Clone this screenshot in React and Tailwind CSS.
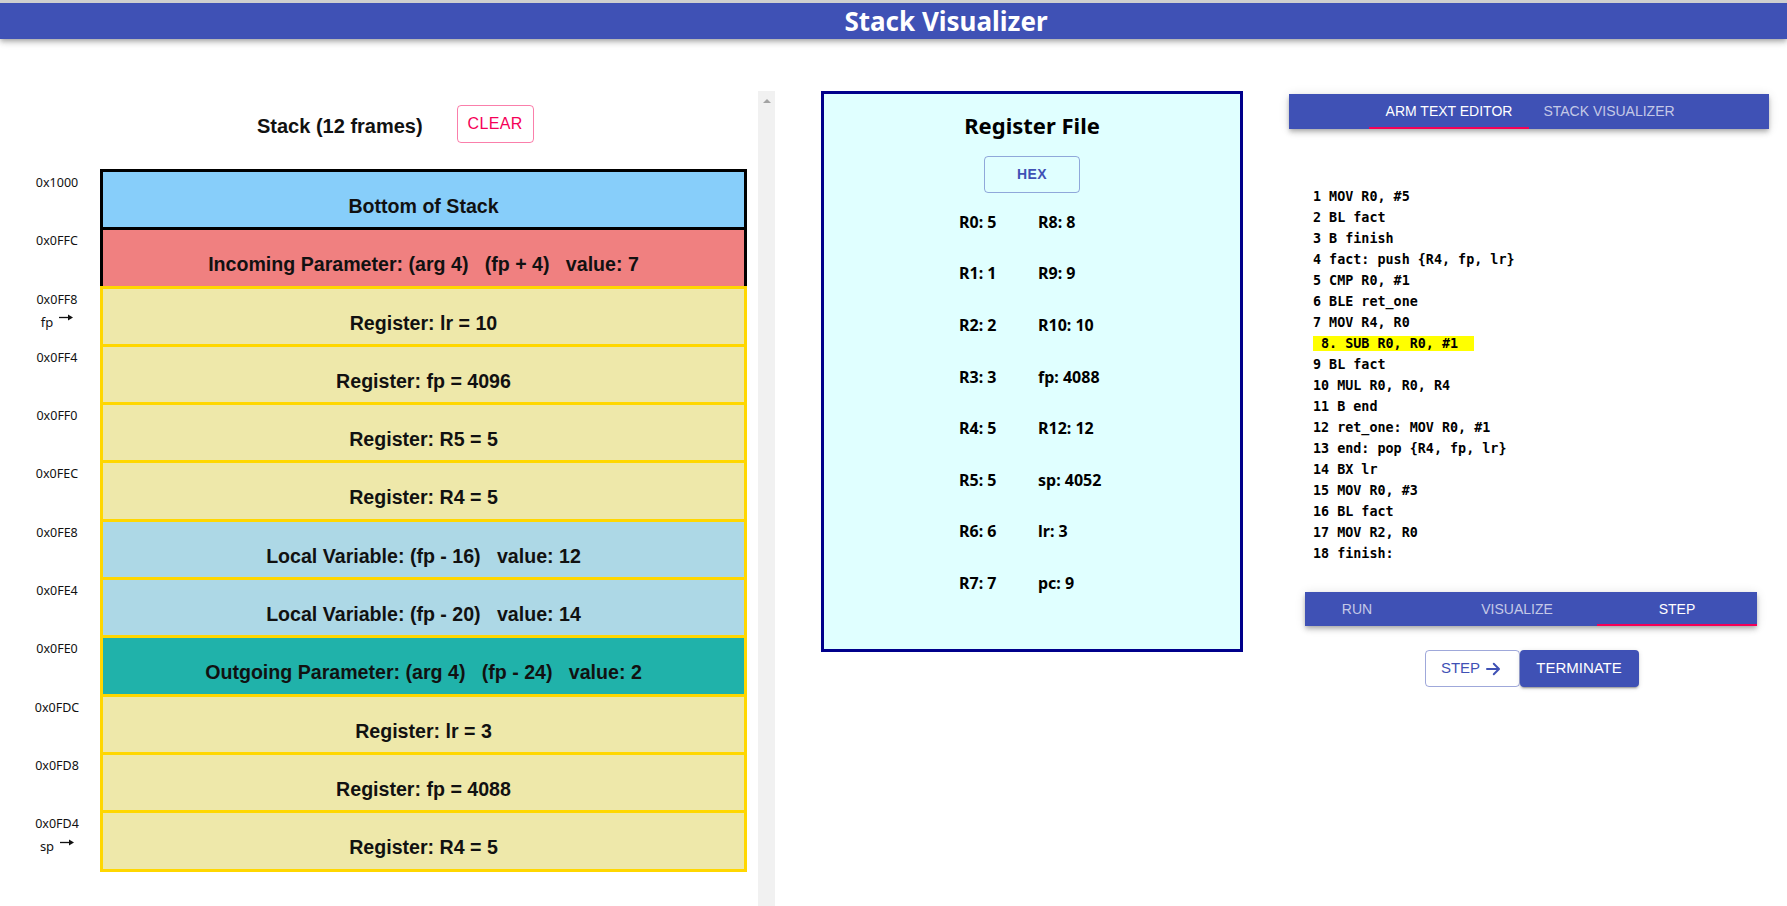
import React from "react";

const ARIAL = { fontFamily: '"Liberation Sans", Arial, sans-serif' };
const SEGOE = { fontFamily: '"Noto Sans", "Open Sans", sans-serif' };
const MONO = { fontFamily: '"DejaVu Sans Mono", "Liberation Mono", monospace' };

const frames = [
  { addr: "0x1000", text: "Bottom of Stack", cls: "bg-[#87cefa] border-black" },
  { addr: "0x0FFC", text: "Incoming Parameter: (arg 4)   (fp + 4)   value: 7", cls: "bg-[#f08080] border-black" },
  { addr: "0x0FF8", ptr: "fp", text: "Register: lr = 10", cls: "bg-[#eee8aa] border-[#ffd700]" },
  { addr: "0x0FF4", text: "Register: fp = 4096", cls: "bg-[#eee8aa] border-[#ffd700]" },
  { addr: "0x0FF0", text: "Register: R5 = 5", cls: "bg-[#eee8aa] border-[#ffd700]" },
  { addr: "0x0FEC", text: "Register: R4 = 5", cls: "bg-[#eee8aa] border-[#ffd700]" },
  { addr: "0x0FE8", text: "Local Variable: (fp - 16)   value: 12", cls: "bg-[#add8e6] border-[#ffd700]" },
  { addr: "0x0FE4", text: "Local Variable: (fp - 20)   value: 14", cls: "bg-[#add8e6] border-[#ffd700]" },
  { addr: "0x0FE0", text: "Outgoing Parameter: (arg 4)   (fp - 24)   value: 2", cls: "bg-[#20b2aa] border-[#ffd700]" },
  { addr: "0x0FDC", text: "Register: lr = 3", cls: "bg-[#eee8aa] border-[#ffd700]" },
  { addr: "0x0FD8", text: "Register: fp = 4088", cls: "bg-[#eee8aa] border-[#ffd700]" },
  { addr: "0x0FD4", ptr: "sp", text: "Register: R4 = 5", cls: "bg-[#eee8aa] border-[#ffd700]" },
];

const regs = [
  ["R0: 5", "R8: 8"],
  ["R1: 1", "R9: 9"],
  ["R2: 2", "R10: 10"],
  ["R3: 3", "fp: 4088"],
  ["R4: 5", "R12: 12"],
  ["R5: 5", "sp: 4052"],
  ["R6: 6", "lr: 3"],
  ["R7: 7", "pc: 9"],
];

const code = [
  "1 MOV R0, #5",
  "2 BL fact",
  "3 B finish",
  "4 fact: push {R4, fp, lr}",
  "5 CMP R0, #1",
  "6 BLE ret_one",
  "7 MOV R4, R0",
  null,
  "9 BL fact",
  "10 MUL R0, R0, R4",
  "11 B end",
  "12 ret_one: MOV R0, #1",
  "13 end: pop {R4, fp, lr}",
  "14 BX lr",
  "15 MOV R0, #3",
  "16 BL fact",
  "17 MOV R2, R0",
  "18 finish:",
];

const SmallArrow = () => (
  <svg width="14" height="7" viewBox="0 0 14 7" className="mb-[8px]">
    <line x1="0" y1="3.5" x2="10" y2="3.5" stroke="#111" strokeWidth="1.3" />
    <polygon points="9,0.5 14,3.5 9,6.5" fill="#111" />
  </svg>
);

const Frame = ({ f, first }) => (
  <div className={`flex ${first ? "" : "-mt-[3px]"}`}>
    <div className="w-[100px] shrink-0 pl-[14px] pt-[5px] flex flex-col items-center text-[12.5px] leading-[18px] text-[#111]" style={SEGOE}>
      <span>{f.addr}</span>
      {f.ptr && (
        <span className="flex items-center gap-[6px] mt-[4px] text-[13px]">
          {f.ptr}
          <SmallArrow />
        </span>
      )}
    </div>
    <div
      className={`w-[647px] h-[61.3px] border-[3px] pt-[22px] text-center text-[19.6px] leading-[24px] font-bold text-[#111] whitespace-pre ${f.cls}`}
      style={ARIAL}
    >
      {f.text}
    </div>
  </div>
);

export default function App() {
  return (
    <div className="w-[1787px] h-[906px] overflow-hidden bg-white">
      {/* header */}
      <div className="border-t-[3px] border-[#cfcfcf] bg-[#3f51b5] h-[39px] flex items-center justify-center pl-[105px] shadow-[0_2px_4px_-1px_rgba(0,0,0,0.2),0_4px_5px_0_rgba(0,0,0,0.14),0_1px_10px_0_rgba(0,0,0,0.12)] relative z-10">
        <h1 className="text-white text-[26px] font-bold leading-none" style={SEGOE}>
          Stack Visualizer
        </h1>
      </div>

      <div className="flex items-start mt-[52px]">
        {/* left: stack */}
        <div className="w-[775px] h-[815px] flex shrink-0 overflow-hidden">
          <div className="w-[758px]">
            <div className="flex items-center pt-[14px] pl-[257px]">
              <span className="text-[20px] font-bold text-[#111] mt-[3px]" style={ARIAL}>Stack (12 frames)</span>
              <button
                className="ml-[34px] w-[77px] h-[38px] rounded-[4px] border border-[#f5005780] text-[#f50057] text-[16px] tracking-[0.4px]"
                style={ARIAL}
              >
                CLEAR
              </button>
            </div>
            <div className="mt-[26px]">
              {frames.map((f, i) => (
                <Frame key={i} f={f} first={i === 0} />
              ))}
            </div>
          </div>
          <div className="w-[17px] h-full bg-[#f1f1f1] flex justify-center pt-[8px]">
            <div className="w-0 h-0 border-l-[4px] border-r-[4px] border-b-[4px] border-l-transparent border-r-transparent border-b-[#a3a3a3]" />
          </div>
        </div>

        {/* middle: register file */}
        <div className="ml-[46px] w-[422px] h-[561px] border-[3px] border-[#00008b] bg-[#e0ffff] flex flex-col items-center shrink-0">
          <h2 className="mt-[16px] text-[22px] font-bold text-black leading-[30px]" style={SEGOE}>
            Register File
          </h2>
          <button
            className="mt-[16px] w-[96px] h-[37px] rounded-[4px] border border-[#3f51b580] text-[#3f51b5] text-[14px] font-bold tracking-[0.4px]"
            style={ARIAL}
          >
            HEX
          </button>
          <div className="mt-[3px] grid grid-cols-[79px_67px] auto-rows-[51.6px] items-center text-[16px] font-bold text-black" style={SEGOE}>
            {regs.map(([a, b], i) => (
              <React.Fragment key={i}>
                <span>{a}</span>
                <span className="whitespace-nowrap">{b}</span>
              </React.Fragment>
            ))}
          </div>
        </div>

        {/* right: editor */}
        <div className="ml-[46px] w-[480px] shrink-0 flex flex-col mt-[3px]">
          <div className="h-[35px] bg-[#3f51b5] flex justify-center shadow-[0_2px_4px_-1px_rgba(0,0,0,0.2),0_4px_5px_0_rgba(0,0,0,0.14),0_1px_10px_0_rgba(0,0,0,0.12)]" style={ARIAL}>
            <div className="w-[160px] h-full flex items-center justify-center text-white text-[14px] border-b-2 border-[#f50057] pt-[2px]">
              ARM TEXT EDITOR
            </div>
            <div className="w-[160px] h-full flex items-center justify-center text-white/70 text-[14px]">
              STACK VISUALIZER
            </div>
          </div>

          <div className="mt-[57px] pl-[24px] text-[13.4px] leading-[21px] font-bold text-black" style={MONO}>
            {code.map((l, i) =>
              l === null ? (
                <div key={i}>
                  <span className="bg-[#ffff00] whitespace-pre"> 8. SUB R0, R0, #1  </span>
                </div>
              ) : (
                <div key={i} className="whitespace-pre">{l}</div>
              )
            )}
          </div>

          <div className="mt-[28px] ml-[16px] w-[452px] h-[34px] bg-[#3f51b5] overflow-hidden flex justify-end shadow-[0_2px_4px_-1px_rgba(0,0,0,0.2),0_4px_5px_0_rgba(0,0,0,0.14),0_1px_10px_0_rgba(0,0,0,0.12)]" style={ARIAL}>
            <div className="w-[160px] shrink-0 h-full flex items-center justify-center text-white/70 text-[14px]">RUN</div>
            <div className="w-[160px] shrink-0 h-full flex items-center justify-center text-white/70 text-[14px]">VISUALIZE</div>
            <div className="w-[160px] shrink-0 h-full flex items-center justify-center text-white text-[14px] border-b-2 border-[#f50057] pt-[2px]">STEP</div>
          </div>

          <div className="mt-[24px] ml-[5px] flex justify-center" style={ARIAL}>
            <button className="w-[95px] h-[37px] rounded-[4px] border border-[#3f51b580] text-[#3f51b5] text-[15px] flex items-center justify-center gap-[3px]">
              STEP
              <svg width="20" height="18" viewBox="0 0 24 24" fill="none" stroke="#3f51b5" strokeWidth="2.6" strokeLinecap="round" strokeLinejoin="round">
                <path d="M4 12h15" />
                <path d="M13 5l7 7-7 7" />
              </svg>
            </button>
            <button className="w-[119px] h-[37px] rounded-[4px] bg-[#3f51b5] text-white text-[15px] shadow-[0_3px_1px_-2px_rgba(0,0,0,0.2),0_2px_2px_0_rgba(0,0,0,0.14),0_1px_5px_0_rgba(0,0,0,0.12)]">
              TERMINATE
            </button>
          </div>
        </div>
      </div>
    </div>
  );
}
